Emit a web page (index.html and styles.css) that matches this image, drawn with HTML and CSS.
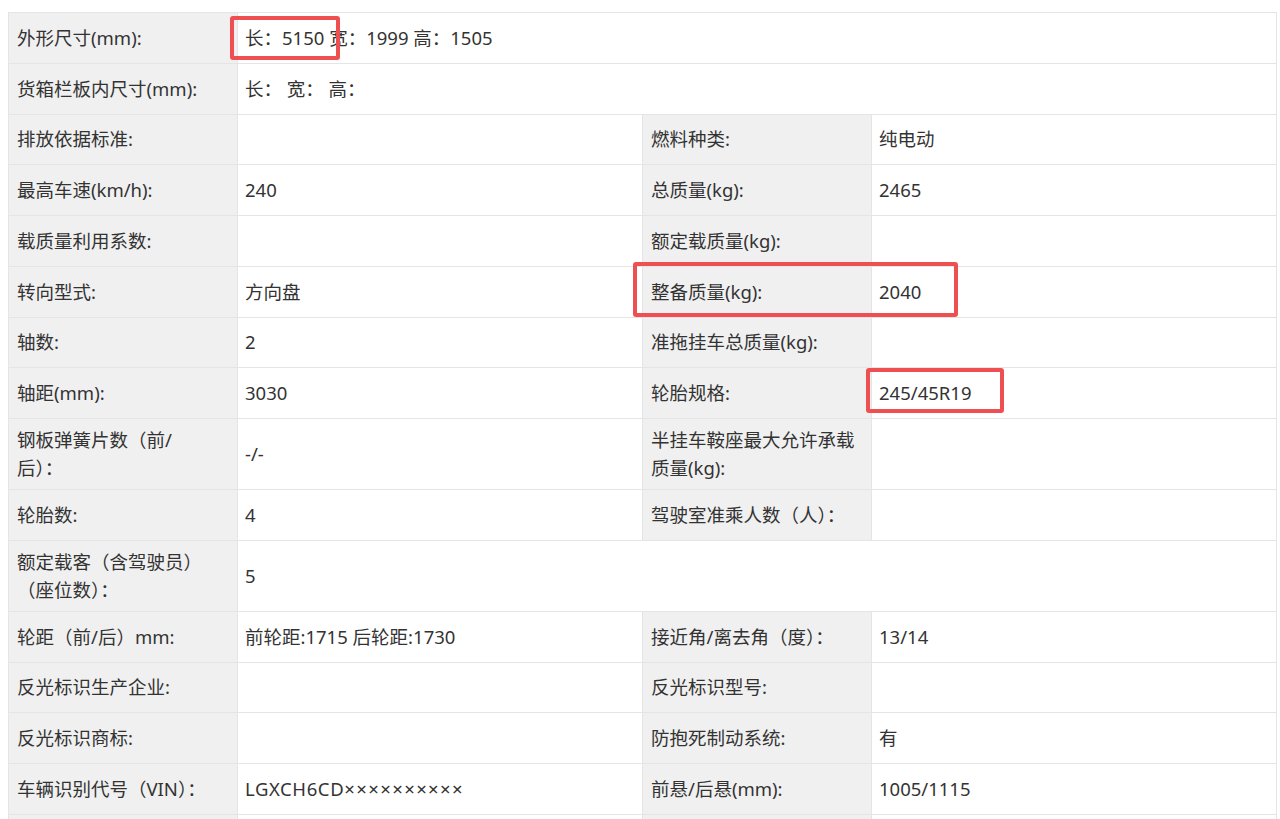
FILE: index.html
```html
<!DOCTYPE html>
<html lang="zh-CN">
<head>
<meta charset="utf-8">
<title>车辆参数</title>
<link rel="stylesheet" href="styles.css">
</head>
<body>
<div class="page">
  <table class="spec">
    <colgroup>
      <col class="c-label"><col class="c-value"><col class="c-label"><col class="c-value2">
    </colgroup>
    <tbody>
      <tr><td class="lb">外形尺寸(mm):</td><td class="vl" colspan="3">长：5150 宽：1999 高：1505</td></tr>
      <tr><td class="lb">货箱栏板内尺寸(mm):</td><td class="vl" colspan="3">长： 宽： 高：</td></tr>
      <tr><td class="lb">排放依据标准:</td><td class="vl"></td><td class="lb">燃料种类:</td><td class="vl">纯电动</td></tr>
      <tr><td class="lb">最高车速(km/h):</td><td class="vl">240</td><td class="lb">总质量(kg):</td><td class="vl">2465</td></tr>
      <tr><td class="lb">载质量利用系数:</td><td class="vl"></td><td class="lb">额定载质量(kg):</td><td class="vl"></td></tr>
      <tr><td class="lb">转向型式:</td><td class="vl">方向盘</td><td class="lb">整备质量(kg):</td><td class="vl">2040</td></tr>
      <tr><td class="lb">轴数:</td><td class="vl">2</td><td class="lb">准拖挂车总质量(kg):</td><td class="vl"></td></tr>
      <tr><td class="lb">轴距(mm):</td><td class="vl">3030</td><td class="lb">轮胎规格:</td><td class="vl">245/45R19</td></tr>
      <tr class="tall"><td class="lb">钢板弹簧片数（前/<br>后）：</td><td class="vl">-/-</td><td class="lb">半挂车鞍座最大允许承载质量(kg):</td><td class="vl"></td></tr>
      <tr><td class="lb">轮胎数:</td><td class="vl">4</td><td class="lb">驾驶室准乘人数（人）：</td><td class="vl"></td></tr>
      <tr class="tall"><td class="lb">额定载客（含驾驶员）（座位数）：</td><td class="vl" colspan="3">5</td></tr>
      <tr><td class="lb">轮距（前/后）mm:</td><td class="vl">前轮距:1715 后轮距:1730</td><td class="lb">接近角/离去角（度）：</td><td class="vl">13/14</td></tr>
      <tr><td class="lb">反光标识生产企业:</td><td class="vl"></td><td class="lb">反光标识型号:</td><td class="vl"></td></tr>
      <tr><td class="lb">反光标识商标:</td><td class="vl"></td><td class="lb">防抱死制动系统:</td><td class="vl">有</td></tr>
      <tr><td class="lb">车辆识别代号（VIN）：</td><td class="vl"><span class="vin">LGXCH6CD</span><span class="masked">××××××××××</span></td><td class="lb">前悬/后悬(mm):</td><td class="vl">1005/1115</td></tr>
      <tr><td class="lb">&nbsp;</td><td class="vl"></td><td class="lb"></td><td class="vl"></td></tr>
    </tbody>
  </table>
  <div class="mark mark-size"></div>
  <div class="mark mark-mass"></div>
  <div class="mark mark-tire"></div>
</div>
</body>
</html>
```

FILE: styles.css
```css
html, body {
  margin: 0;
  padding: 0;
  background: #ffffff;
}

body {
  font-family: "Noto Sans", "Noto Sans CJK SC", sans-serif;
  color: #333333;
  font-size: 18.5px;
  height: 819px;
  overflow: hidden;
}

.page {
  position: relative;
  padding: 12px 0 0 8px;
}

.spec {
  border-collapse: collapse;
  table-layout: fixed;
  width: 1268px;
}

.c-label { width: 229px; }
.c-value { width: 405px; }
.c-value2 { width: 405px; }

.spec tr {
  height: 50.75px;
}

.spec tr.tall {
  height: 71px;
}

.spec td {
  border: 1px solid #e5e5e5;
  line-height: 28px;
  vertical-align: middle;
  padding: 6px 8px 6px 7px;
}

.spec td.lb {
  background: #f0f0f0;
  padding-left: 8px;
  padding-right: 14px;
}

.spec td.vl {
  background: #ffffff;
}

.vin {
  letter-spacing: 0.6px;
}

.masked {
  letter-spacing: 1.4px;
}

.mark {
  position: absolute;
  border: 4px solid #ee4f50;
  border-radius: 3px;
  box-sizing: border-box;
}

.mark-size {
  left: 230px;
  top: 16px;
  width: 110px;
  height: 44px;
}

.mark-mass {
  left: 633px;
  top: 262px;
  width: 325px;
  height: 55px;
}

.mark-tire {
  left: 866px;
  top: 368px;
  width: 138px;
  height: 45px;
}
```
